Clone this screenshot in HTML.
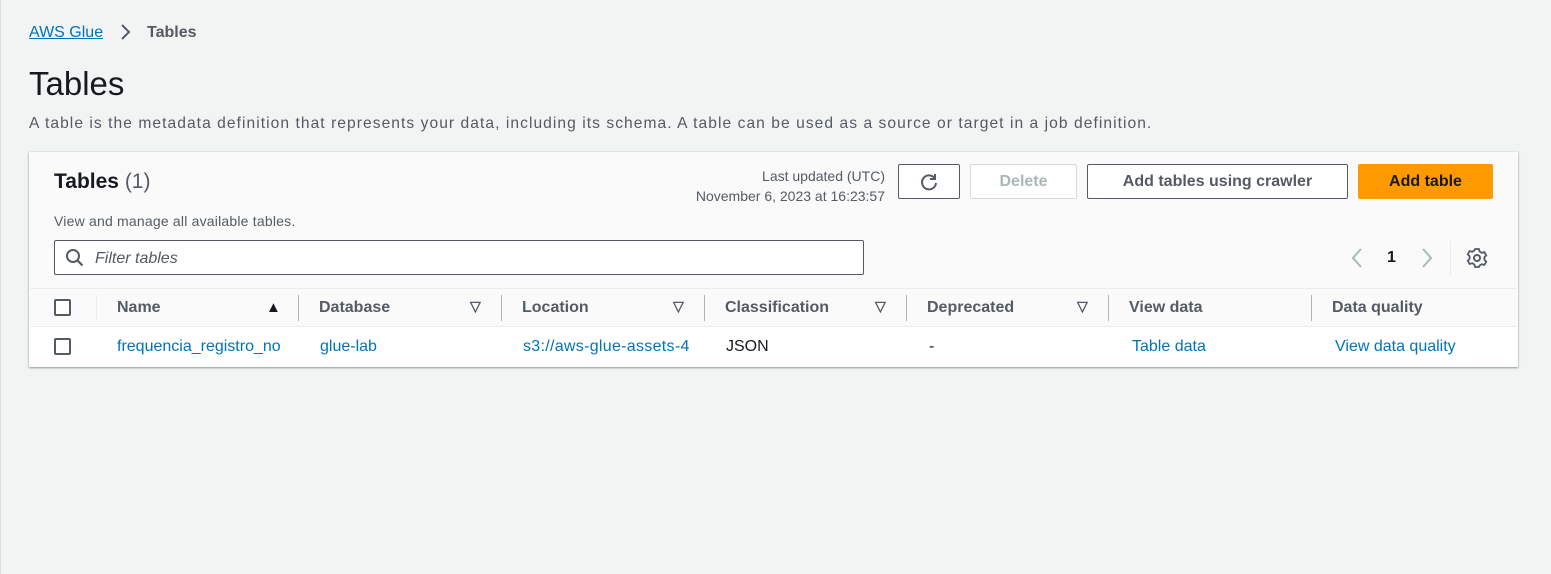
<!DOCTYPE html>
<html><head><meta charset="utf-8"><style>
*{margin:0;padding:0;box-sizing:border-box}
body{width:1551px;height:574px;background:#f2f3f3;font-family:"Liberation Sans",sans-serif;color:#16191f;position:relative;overflow:hidden;box-shadow:inset 1px 0 0 #ddd}
.a{position:absolute;white-space:nowrap}
.lnk{color:#0073bb}
.btn{position:absolute;height:35px;border:1px solid #545b64;border-radius:2px;background:#fff;font-weight:bold;font-size:16px;color:#545b64;display:flex;align-items:center;justify-content:center}
.hd{position:absolute;top:299px;font-weight:bold;font-size:16px;color:#545b64}
.sep{position:absolute;top:295px;width:1px;height:26px;background:#aab7b8}
.tri{position:absolute;top:298px;font-size:14px;color:#545b64;font-weight:bold}
.cb{position:absolute;width:17px;height:17px;border:2px solid #545b64;border-radius:2px;background:#fff}
.cell{position:absolute;top:338px;font-size:16px}
</style></head><body>
<div class="a lnk" style="left:29px;top:24px;font-size:16px;text-decoration:underline">AWS Glue</div>
<svg class="a" style="left:119px;top:23px" width="14" height="18"><path d="M3 2l7 7-7 7" stroke="#545b64" stroke-width="2" fill="none"/></svg>
<div class="a" style="left:147px;top:24px;font-size:16px;font-weight:bold;color:#545b64">Tables</div>
<div class="a" style="left:29px;top:65px;font-size:33px;color:#16191f">Tables</div>
<div class="a" style="left:29px;top:115px;font-size:15.6px;color:#545b64;letter-spacing:1.05px">A table is the metadata definition that represents your data, including its schema. A table can be used as a source or target in a job definition.</div>
<div class="a" style="left:29px;top:152px;width:1489px;height:215px;background:#fafafa;box-shadow:0 1px 2px rgba(0,28,36,.4),0 0 0 1px #eaeded"></div>
<div class="a" style="left:54px;top:170px;font-size:21px;font-weight:bold">Tables <span style="font-weight:normal;color:#545b64">(1)</span></div>
<div class="a" style="left:54px;top:213px;font-size:14px;color:#545b64;letter-spacing:0.2px">View and manage all available tables.</div>
<div class="a" style="right:666px;top:166px;font-size:14px;color:#545b64;text-align:right;line-height:20px">Last updated (UTC)<br>November 6, 2023 at 16:23:57</div>
<div class="btn" style="left:898px;top:164px;width:62px;color:#545b64"><svg width="20" height="20" viewBox="0 0 20 20"><path d="M15.5 6A7 7 0 1 0 17 11" stroke="#545b64" stroke-width="2" fill="none"/><path d="M16 2v5h-5" stroke="#545b64" stroke-width="2" fill="none"/></svg></div>
<div class="btn" style="left:970px;top:164px;width:107px;border-color:#d5dbdb;color:#aab7b8">Delete</div>
<div class="btn" style="left:1087px;top:164px;width:261px;color:#545b64">Add tables using crawler</div>
<div class="btn" style="left:1358px;top:164px;width:135px;background:#ff9900;border-color:#ff9900;color:#16191f">Add table</div>
<div class="a" style="left:54px;top:240px;width:810px;height:35px;border:1px solid #545b64;border-radius:2px;background:#fff"></div>
<svg class="a" style="left:65px;top:248px" width="20" height="20"><circle cx="8" cy="8" r="6" stroke="#545b64" stroke-width="2" fill="none"/><path d="M12.5 12.5l5 5" stroke="#545b64" stroke-width="2.2"/></svg>
<div class="a" style="left:95px;top:250px;font-size:16px;font-style:italic;color:#545b64">Filter tables</div>
<svg class="a" style="left:1350px;top:247px" width="14" height="22"><path d="M11 2L3 11l8 9" stroke="#aab7b8" stroke-width="2" fill="none"/></svg>
<div class="a" style="left:1387px;top:249px;font-size:16px;font-weight:bold">1</div>
<svg class="a" style="left:1420px;top:247px" width="14" height="22"><path d="M3 2l8 9-8 9" stroke="#aab7b8" stroke-width="2" fill="none"/></svg>
<div class="a" style="left:1450px;top:241px;width:1px;height:34px;background:#eaeded"></div>
<svg class="a" style="left:1466px;top:247px" width="22" height="22" viewBox="0 0 22 22"><circle cx="11" cy="11" r="3" stroke="#545b64" stroke-width="2" fill="none"/><path d="M9 2h4l.6 2.5 2.2 1.3 2.5-.8 2 3.4-1.9 1.8v2.6l1.9 1.8-2 3.4-2.5-.8-2.2 1.3L13 20H9l-.6-2.5-2.2-1.3-2.5.8-2-3.4 1.9-1.8V9.2L1.7 7.4l2-3.4 2.5.8 2.2-1.3z" stroke="#545b64" stroke-width="1.8" fill="none" stroke-linejoin="round"/></svg>
<div class="a" style="left:30px;top:288px;width:1487px;height:1px;background:#eaeded"></div>
<div class="a" style="left:30px;top:326px;width:1487px;height:1px;background:#eaeded"></div>
<div class="cb" style="left:54px;top:299px"></div>
<div class="a" style="left:96px;top:295px;width:1px;height:26px;background:#eaeded"></div>
<div class="hd" style="left:117px">Name</div><div class="a" style="left:266px;top:299px;font-size:15px">▲</div>
<div class="sep" style="left:298px"></div>
<div class="hd" style="left:319px">Database</div><div class="tri" style="left:470px">▽</div>
<div class="sep" style="left:501px"></div>
<div class="hd" style="left:522px">Location</div><div class="tri" style="left:673px">▽</div>
<div class="sep" style="left:704px"></div>
<div class="hd" style="left:725px">Classification</div><div class="tri" style="left:875px">▽</div>
<div class="sep" style="left:906px"></div>
<div class="hd" style="left:927px">Deprecated</div><div class="tri" style="left:1077px">▽</div>
<div class="sep" style="left:1108px"></div>
<div class="hd" style="left:1129px">View data</div>
<div class="sep" style="left:1311px"></div>
<div class="hd" style="left:1332px">Data quality</div>
<div class="a" style="left:30px;top:327px;width:1487px;height:39px;background:#fff"></div>
<div class="cb" style="left:54px;top:338px"></div>
<div class="cell lnk" style="left:117px;width:182px;overflow:hidden">frequencia_registro_no</div>
<div class="cell lnk" style="left:320px">glue-lab</div>
<div class="cell lnk" style="left:523px;width:183px;overflow:hidden;letter-spacing:0.3px">s3://aws-glue-assets-4</div>
<div class="cell" style="left:726px">JSON</div>
<div class="cell" style="left:929px">-</div>
<div class="cell lnk" style="left:1132px">Table data</div>
<div class="cell lnk" style="left:1335px">View data quality</div>
</body></html>
